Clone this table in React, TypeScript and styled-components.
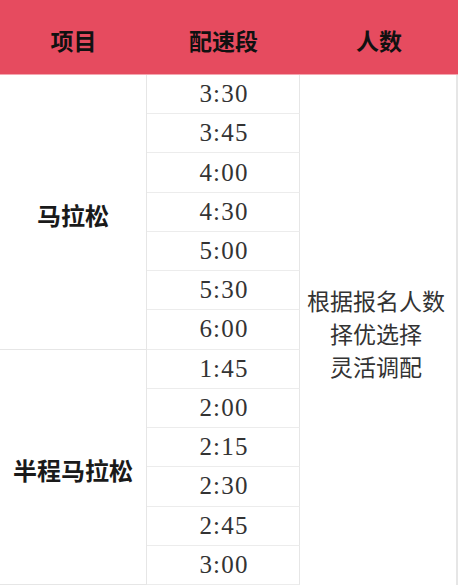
import { styled, createGlobalStyle } from "styled-components";

const GlobalStyle = createGlobalStyle`
  html, body {
    margin: 0;
    padding: 0;
    background: #ffffff;
  }
  body {
    font-family: "Noto Sans CJK SC", "Liberation Serif", serif;
  }
`;

const groups = [
  { name: "马拉松", paces: ["3:30", "3:45", "4:00", "4:30", "5:00", "5:30", "6:00"] },
  { name: "半程马拉松", paces: ["1:45", "2:00", "2:15", "2:30", "2:45", "3:00"] },
];

const totalRows = groups.reduce((n, g) => n + g.paces.length, 0);

export default function App() {
  let rowStart = 2;

  return (
    <>
      <GlobalStyle />
      <Table $rows={totalRows}>
        <HeadCell>项目</HeadCell>
        <HeadCell>配速段</HeadCell>
        <HeadCell>人数</HeadCell>

        {groups.map((group) => {
          const start = rowStart;
          rowStart += group.paces.length;
          return [
            <EventCell
              key={group.name}
              style={{ gridRow: `${start} / span ${group.paces.length}` }}
            >
              {group.name}
            </EventCell>,
            ...group.paces.map((pace, i) => (
              <PaceCell key={group.name + pace} style={{ gridRow: start + i }}>
                {pace}
              </PaceCell>
            )),
          ];
        })}

        <CountCell style={{ gridRow: `2 / span ${totalRows}` }}>
          <span>根据报名人数</span>
          <span>择优选择</span>
          <span>灵活调配</span>
        </CountCell>
      </Table>
    </>
  );
}

const Table = styled.div<{ $rows: number }>`
  display: grid;
  width: 458px;
  height: 585px;
  grid-template-columns: 147px 153px 158px;
  grid-template-rows: 75px repeat(${({ $rows }) => $rows}, 1fr);
  overflow: hidden;
`;

const HeadCell = styled.div`
  background: #e64b5f;
  border-bottom: 1px solid #f4a6b0;
  display: flex;
  align-items: center;
  justify-content: center;
  padding-top: 6px;
  box-sizing: border-box;
  font-family: "Noto Sans CJK SC", sans-serif;
  font-weight: 700;
  font-size: 23px;
  color: #111111;
`;

const EventCell = styled.div`
  grid-column: 1;
  border-right: 1px solid #e6e6e6;
  border-bottom: 1px solid #e6e6e6;
  display: flex;
  align-items: center;
  justify-content: center;
  padding-top: 5px;
  box-sizing: border-box;
  font-family: "Noto Sans CJK SC", sans-serif;
  font-weight: 700;
  font-size: 24px;
  color: #1a1a1a;
`;

const PaceCell = styled.div`
  grid-column: 2;
  border-right: 1px solid #e6e6e6;
  border-bottom: 1px solid #ececec;
  display: flex;
  align-items: center;
  justify-content: center;
  padding-left: 2px;
  box-sizing: border-box;
  font-family: "Liberation Serif", serif;
  font-size: 25px;
  letter-spacing: 1.2px;
  color: #333333;
`;

const CountCell = styled.div`
  grid-column: 3;
  border-right: 2px solid #e6e6e6;
  display: flex;
  flex-direction: column;
  align-items: center;
  justify-content: center;
  padding-top: 6px;
  padding-right: 4px;
  box-sizing: border-box;
  font-family: "Noto Sans CJK SC", sans-serif;
  font-size: 23px;
  line-height: 33px;
  color: #333333;
`;
